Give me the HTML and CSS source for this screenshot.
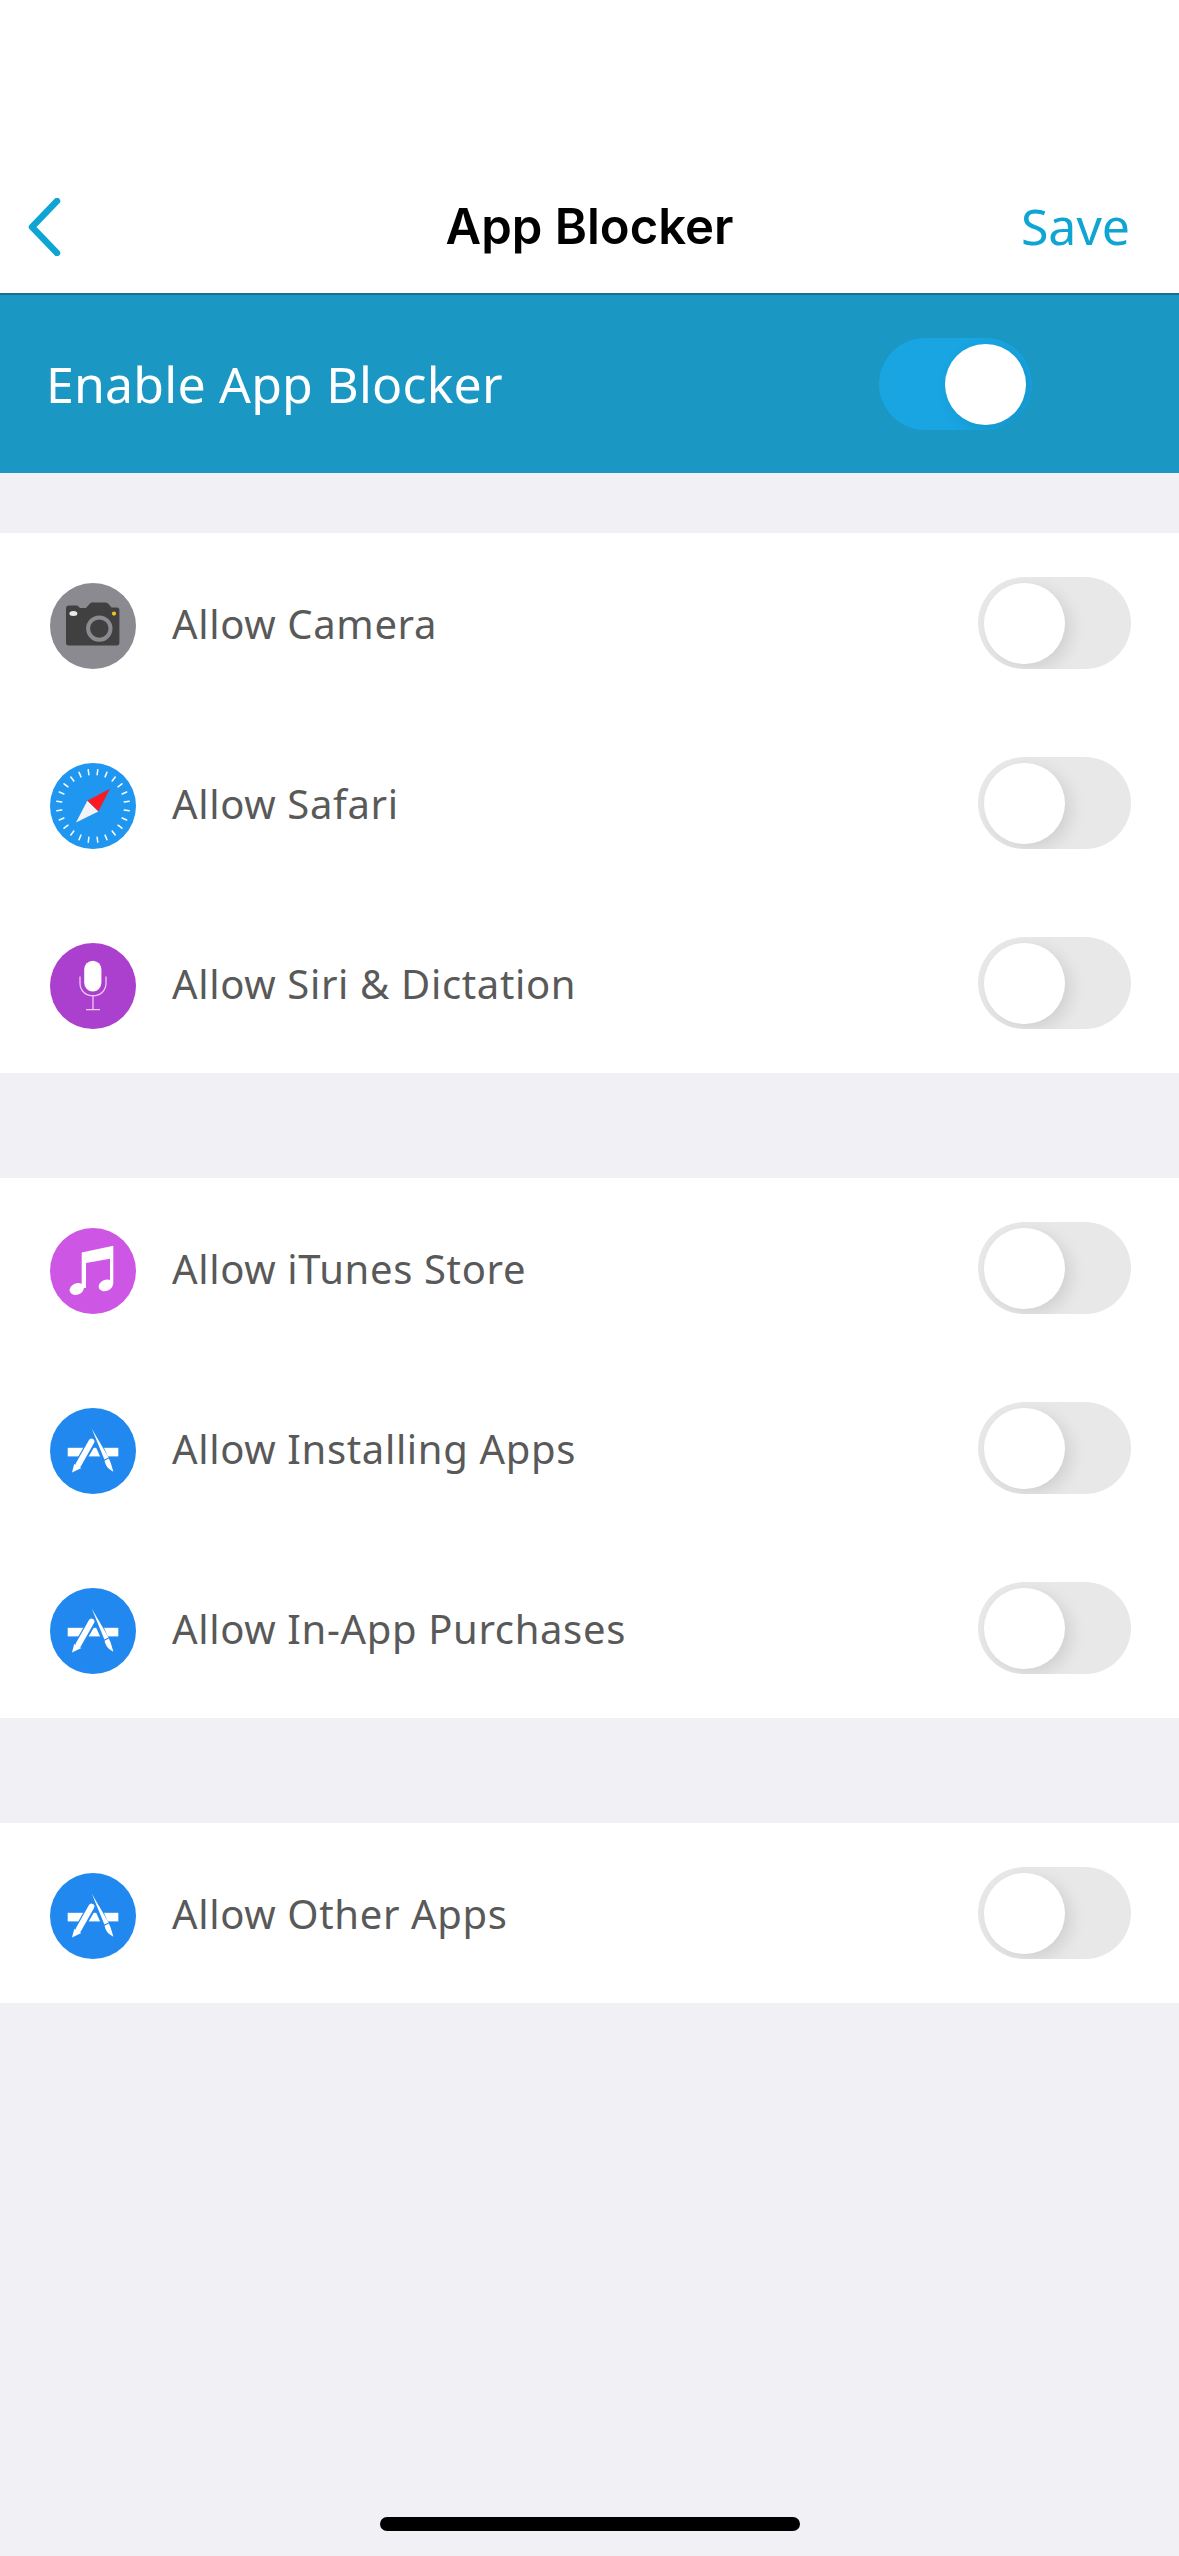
FILE: index.html
```html
<!doctype html>
<html lang="en">
<head>
  <meta charset="utf-8">
  <title>App Blocker</title>
  <link rel="stylesheet" href="styles.css">
</head>
<body>
  <svg class="sprites" width="0" height="0">
    <symbol id="appstore" viewBox="0 0 86 86">
      <circle cx="43" cy="43" r="43" fill="#2088ee"/>
      <rect x="17.7" y="39.8" width="50.6" height="8.6" fill="#fff"/>
      <path d="M41.5 34.5 28 58" stroke="#2088ee" stroke-width="9"/>
      <path d="M41.7 21 60 62" stroke="#2088ee" stroke-width="7"/>
      <path d="M41.5 33.5 28.5 56.5" stroke="#fff" stroke-width="5.8" stroke-linecap="round"/>
      <path d="M22 64.6 24.2 56 31.4 60Z" fill="#fff"/>
      <path d="M41.7 20.5 58.6 49.4 54.4 51.6Z" fill="#fff"/>
      <path d="M54.6 52.8 58.8 50.6C60.8 54 61.8 59 63.4 63.8 59 61.6 55.4 58 54.6 52.8Z" fill="#fff"/>
    </symbol>
  </svg>

  <header class="nav">
    <svg class="back" width="34" height="58" viewBox="0 0 34 58">
      <path d="M30 3 5 29 30 55" fill="none" stroke="#0ea5d3" stroke-width="6.5" stroke-linecap="round" stroke-linejoin="round"/>
    </svg>
    <h1 class="nav-title">App Blocker</h1>
    <span class="nav-save">Save</span>
  </header>

  <div class="banner">
    <span class="banner-label">Enable App Blocker</span>
    <span class="switch switch-on"><span class="knob"></span></span>
  </div>

  <section class="group">
    <div class="row">
      <svg class="icon" viewBox="0 0 86 86">
        <circle cx="43" cy="43" r="43" fill="#8a8a90"/>
        <path d="M19 22.5H26.5C28 22.5 29 24 30 25H36L39.5 21C40.5 20 41.5 19.6 43 19.6H55C57 19.6 58 20.5 59 21.6L61.5 24.5H67C68.5 24.5 69.4 25.5 69.4 27V60C69.4 61.5 68.5 62.4 67 62.4H18.4C17 62.4 16 61.5 16 60V25.5C16 23.5 17 22.5 19 22.5Z" fill="#404040"/>
        <circle cx="49.3" cy="45.6" r="11.2" fill="#404040" stroke="#8a8a90" stroke-width="4"/>
        <ellipse cx="23.4" cy="30.6" rx="4" ry="2.5" fill="#e8e8e8"/>
        <circle cx="64" cy="30.6" r="2.1" fill="#f3c11b"/>
      </svg>
      <span class="row-label">Allow Camera</span>
      <span class="switch"><span class="knob"></span></span>
    </div>
    <div class="row">
      <svg class="icon" viewBox="0 0 86 86">
        <circle cx="43" cy="43" r="43" fill="#1f96f0"/>
        <g stroke="#fff" stroke-width="1.5" stroke-linecap="round">
          <path d="M43 6.5V11.5" transform="rotate(7.5 43 43)"/>
          <path d="M43 6.5V11.5" transform="rotate(22.5 43 43)"/>
          <path d="M43 6.5V11.5" transform="rotate(37.5 43 43)"/>
          <path d="M43 6.5V11.5" transform="rotate(52.5 43 43)"/>
          <path d="M43 6.5V11.5" transform="rotate(67.5 43 43)"/>
          <path d="M43 6.5V11.5" transform="rotate(82.5 43 43)"/>
          <path d="M43 6.5V11.5" transform="rotate(97.5 43 43)"/>
          <path d="M43 6.5V11.5" transform="rotate(112.5 43 43)"/>
          <path d="M43 6.5V11.5" transform="rotate(127.5 43 43)"/>
          <path d="M43 6.5V11.5" transform="rotate(142.5 43 43)"/>
          <path d="M43 6.5V11.5" transform="rotate(157.5 43 43)"/>
          <path d="M43 6.5V11.5" transform="rotate(172.5 43 43)"/>
          <path d="M43 6.5V11.5" transform="rotate(187.5 43 43)"/>
          <path d="M43 6.5V11.5" transform="rotate(202.5 43 43)"/>
          <path d="M43 6.5V11.5" transform="rotate(217.5 43 43)"/>
          <path d="M43 6.5V11.5" transform="rotate(232.5 43 43)"/>
          <path d="M43 6.5V11.5" transform="rotate(247.5 43 43)"/>
          <path d="M43 6.5V11.5" transform="rotate(262.5 43 43)"/>
          <path d="M43 6.5V11.5" transform="rotate(277.5 43 43)"/>
          <path d="M43 6.5V11.5" transform="rotate(292.5 43 43)"/>
          <path d="M43 6.5V11.5" transform="rotate(307.5 43 43)"/>
          <path d="M43 6.5V11.5" transform="rotate(322.5 43 43)"/>
          <path d="M43 6.5V11.5" transform="rotate(337.5 43 43)"/>
          <path d="M43 6.5V11.5" transform="rotate(352.5 43 43)"/>
        </g>
        <path d="M60 25.7 48.3 48.4 37.3 37.7Z" fill="#fb1a22"/>
        <path d="M26 59.4 37.3 37.7 48.3 48.4Z" fill="#f1f3f6"/>
      </svg>
      <span class="row-label">Allow Safari</span>
      <span class="switch"><span class="knob"></span></span>
    </div>
    <div class="row">
      <svg class="icon" viewBox="0 0 86 86">
        <circle cx="43" cy="43" r="43" fill="#ab3fce"/>
        <rect x="34.2" y="17.7" width="17.2" height="30.7" rx="8.6" fill="#fff"/>
        <path d="M30 33.4V40C30 47.5 35.5 52.7 43 52.7S56 47.5 56 40V33.4M43 52.7V66.6M36 66.6H50" fill="none" stroke="#efc9f5" stroke-width="1.3"/>
      </svg>
      <span class="row-label">Allow Siri &amp; Dictation</span>
      <span class="switch"><span class="knob"></span></span>
    </div>
  </section>

  <section class="group group-spaced">
    <div class="row">
      <svg class="icon" viewBox="0 0 86 86">
        <circle cx="43" cy="43" r="43" fill="#cd56e4"/>
        <path d="M31.7 24.4 63.3 17.7V56H60V30.7L36 35V60H31.7Z" fill="#fff"/>
        <ellipse cx="26.8" cy="61" rx="7.4" ry="5.6" transform="rotate(-22 26.8 61)" fill="#fff"/>
        <ellipse cx="55.8" cy="57.4" rx="7.4" ry="5.6" transform="rotate(-22 55.8 57.4)" fill="#fff"/>
      </svg>
      <span class="row-label">Allow iTunes Store</span>
      <span class="switch"><span class="knob"></span></span>
    </div>
    <div class="row">
      <svg class="icon"><use href="#appstore"/></svg>
      <span class="row-label">Allow Installing Apps</span>
      <span class="switch"><span class="knob"></span></span>
    </div>
    <div class="row">
      <svg class="icon"><use href="#appstore"/></svg>
      <span class="row-label">Allow In-App Purchases</span>
      <span class="switch"><span class="knob"></span></span>
    </div>
  </section>

  <section class="group group-spaced">
    <div class="row">
      <svg class="icon"><use href="#appstore"/></svg>
      <span class="row-label">Allow Other Apps</span>
      <span class="switch"><span class="knob"></span></span>
    </div>
  </section>

  <div class="home-bar"></div>
</body>
</html>
```

FILE: styles.css
```css
html, body {
  margin: 0;
  padding: 0;
}
body {
  position: relative;
  width: 1179px;
  height: 2556px;
  overflow: hidden;
  background-color: #f0f0f5;
  font-family: "Noto Sans", sans-serif;
}
.sprites {
  position: absolute;
}
.nav {
  display: flex;
  align-items: center;
  justify-content: space-between;
  box-sizing: border-box;
  height: 293px;
  padding: 161px 49px 0 27px;
  background-color: #fff;
  position: relative;
}
.nav-title {
  position: absolute;
  left: 0;
  right: 0;
  top: 161px;
  margin: 0;
  line-height: 132px;
  text-align: center;
  font-family: Inter, sans-serif;
  font-size: 49px;
  font-weight: 600;
  color: #000;
}
.nav-save {
  padding-bottom: 3px;
  font-size: 50px;
  color: #0ea5d3;
}
.banner {
  display: flex;
  align-items: center;
  justify-content: space-between;
  box-sizing: border-box;
  height: 180px;
  padding: 0 147px 0 46px;
  background-color: #1a97c2;
  border-top: 2px solid #17708f;
}
.banner-label {
  font-size: 50px;
  letter-spacing: 0.2px;
  color: #fff;
}
.group {
  margin-top: 60px;
  background-color: #fff;
}
.group-spaced {
  margin-top: 105px;
}
.row {
  display: flex;
  align-items: center;
  height: 180px;
  padding: 0 48px 0 50px;
}
.icon {
  width: 86px;
  height: 86px;
  margin-top: 6px;
  flex-shrink: 0;
}
.row-label {
  flex: 1;
  margin-left: 36px;
  font-size: 40px;
  letter-spacing: 0.65px;
  color: #595959;
}
.switch {
  display: flex;
  box-sizing: border-box;
  width: 153px;
  height: 92px;
  padding: 6px 6px 5px;
  border-radius: 46px;
  overflow: hidden;
  background-color: #e8e8e8;
}
.switch-on {
  justify-content: flex-end;
  background-color: #18a5e2;
}
.knob {
  width: 81px;
  height: 81px;
  border-radius: 50%;
  background-color: #fff;
  box-shadow: 6px 5px 16px rgba(0, 0, 0, 0.1);
}
.home-bar {
  position: absolute;
  left: 380px;
  bottom: 25px;
  width: 420px;
  height: 14px;
  border-radius: 7px;
  background-color: #000;
}
```
